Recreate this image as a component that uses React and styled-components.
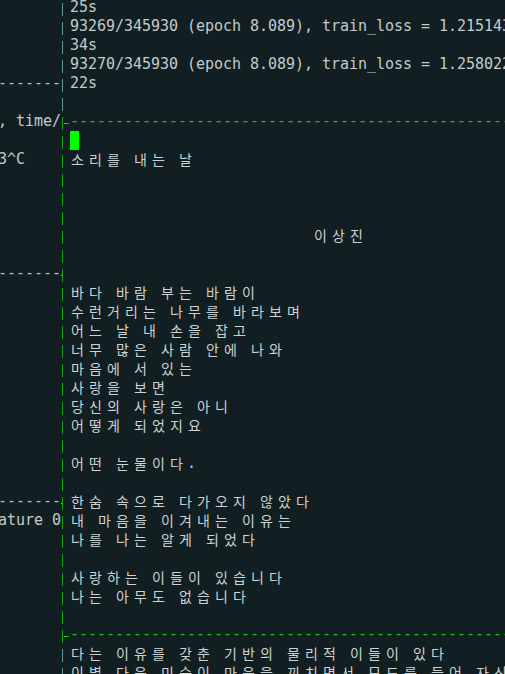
import React from 'react';
import styled, { createGlobalStyle } from 'styled-components';

const BG = '#111f22';
const FG = '#c3cbcb';
const GREEN_LINE = '#12a012';
const GREEN_DASH = '#1fbf1f';
const GREY_LINE = '#5f979b';
const GREY_DASH = '#b4bebe';

const GlobalStyle = createGlobalStyle`
  html, body {
    margin: 0;
    padding: 0;
    background: ${BG};
  }
  body {
    overflow: hidden;
  }
`;

const Screen = styled.div`
  width: 505px;
  height: 674px;
  overflow: hidden;
  background: ${BG};
  color: ${FG};
  font-family: "DejaVu Sans Mono", "Liberation Mono", monospace;
  font-size: 15px;
`;

const Panes = styled.div`
  display: flex;
  margin-top: -2px;
`;

const LeftPane = styled.div`
  width: 61px;
  flex: none;
  display: flex;
  flex-direction: column;
  overflow: hidden;
`;

const SepColumn = styled.div`
  width: 9px;
  flex: none;
  display: flex;
  flex-direction: column;
`;

// one row of the tmux border: a short "|" segment, plus a stub where a
// horizontal border joins it
const SepCell = styled.div`
  height: 19px;
  display: flex;
  align-items: flex-start;
  padding-left: ${p => (p.$stub === 'left' ? 0 : 1)}px;
`;

const Bar = styled.span`
  display: block;
  flex: none;
  width: 1px;
  height: 13px;
  margin-top: 5px;
  background: ${p => p.$color};
`;

const Stub = styled.span`
  display: block;
  flex: none;
  width: ${p => p.$width}px;
  height: 1px;
  margin-top: 11px;
  margin-left: ${p => p.$gap || 0}px;
  background: ${p => p.$color};
`;

const RightPane = styled.div`
  flex: 1;
  display: flex;
  flex-direction: column;
  min-width: 0;
`;

const Line = styled.div`
  display: flex;
  height: 19px;
  justify-content: ${p => (p.$end ? 'flex-end' : 'flex-start')};
  white-space: pre;
`;

const Cell = styled.span`
  display: block;
  flex: none;
  box-sizing: border-box;
  width: ${p => (p.$wide ? 18 : 9)}px;
  height: 19px;
  line-height: 19px;
  color: ${p => p.$color || 'inherit'};
  ${p => p.$wide && `
    font-family: "Noto Sans CJK KR", sans-serif;
    font-size: 14px;
    padding-left: 1px;
    color: #cdd3d3;
  `}
`;

const Cursor = styled.span`
  display: block;
  flex: none;
  width: 9px;
  height: 19px;
  background: #00ff00;
`;

const isWide = ch => /[\u1100-\u11ff\u3130-\u318f\uac00-\ud7af]/.test(ch);

const TermLine = ({ text = '', color, end, cursor }) => (
  <Line $end={end}>
    {cursor && <Cursor />}
    {Array.from(text).map((ch, i) => (
      <Cell key={i} $wide={isWide(ch)} $color={color}>
        {ch}
      </Cell>
    ))}
  </Line>
);

const DASHES = '-'.repeat(60);

const leftRows = [
  '', '', '', '',
  { dash: true },
  '',
  ', time/',
  '',
  '3^C    ',
  '', '', '', '', '',
  { dash: true },
  '', '', '', '', '', '', '', '', '', '', '',
  { dash: true },
  'ature 0',
  '', '', '', '', '', '', '', '',
];

const topPane = [
  '25s',
  '93269/345930 (epoch 8.089), train_loss = 1.215143, time/batch = 0.1',
  '34s',
  '93270/345930 (epoch 8.089), train_loss = 1.258022, time/batch = 0.1',
  '22s',
  '',
];

const mainPane = [
  { cursor: true },
  '소리를 내는 날',
  '', '', '',
  ' '.repeat(27) + '이상진',
  '', '',
  '바다 바람 부는 바람이',
  '수런거리는 나무를 바라보며',
  '어느 날 내 손을 잡고',
  '너무 많은 사람 안에 나와',
  '마음에 서 있는',
  '사랑을 보면',
  '당신의 사랑은 아니',
  '어떻게 되었지요',
  '',
  '어떤 눈물이다.',
  '',
  '한숨 속으로 다가오지 않았다',
  '내 마음을 이겨내는 이유는',
  '나를 나는 알게 되었다',
  '',
  '사랑하는 이들이 있습니다',
  '나는 아무도 없습니다',
  '',
];

const bottomPane = [
  '다는 이유를 갖춘 기반의 물리적 이들이 있다',
  '이별 다음 미숙이 마음을 끼치면서 모드를 들어 자신',
];

// border column: grey beside the inactive panes, green around the active one
const sepRows = Array.from({ length: 36 }, (_, r) => {
  const active = r >= 6 && r <= 33;
  let stub = null;
  if (r === 6 || r === 33) stub = 'right';
  if (r === 14 || r === 26) stub = 'left';
  return { color: active ? GREEN_LINE : GREY_LINE, stub };
});

const App = () => (
  <>
    <GlobalStyle />
    <Screen>
      <Panes>
        <LeftPane>
          {leftRows.map((row, i) =>
            typeof row === 'object' ? (
              <TermLine key={i} end text="-------" color={GREY_DASH} />
            ) : (
              <TermLine key={i} end text={row} />
            )
          )}
        </LeftPane>

        <SepColumn>
          {sepRows.map((s, i) => (
            <SepCell key={i} $stub={s.stub}>
              {s.stub === 'left' && <Stub $width={1} $color={GREY_DASH} />}
              <Bar $color={s.color} />
              {s.stub === 'right' && <Stub $width={5} $gap={1} $color={GREEN_DASH} />}
            </SepCell>
          ))}
        </SepColumn>

        <RightPane>
          {topPane.map((t, i) => (
            <TermLine key={`t${i}`} text={t} />
          ))}
          <TermLine text={DASHES} color={GREEN_DASH} />
          {mainPane.map((t, i) =>
            typeof t === 'object' ? (
              <TermLine key={`m${i}`} cursor />
            ) : (
              <TermLine key={`m${i}`} text={t} />
            )
          )}
          <TermLine text={DASHES} color={GREEN_DASH} />
          {bottomPane.map((t, i) => (
            <TermLine key={`b${i}`} text={t} />
          ))}
        </RightPane>
      </Panes>
    </Screen>
  </>
);

export default App;
